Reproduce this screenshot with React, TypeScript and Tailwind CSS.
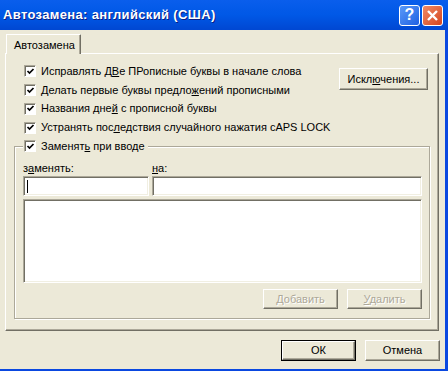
import React from "react";

function U({ children }: { children: React.ReactNode }) {
  return <span className="underline decoration-1 underline-offset-[1px]">{children}</span>;
}

function Check() {
  return (
    <div className="w-[12px] h-[12px] shrink-0 bg-white border-t border-l border-t-[#ACA899] border-l-[#ACA899] border-b border-r border-b-white border-r-white shadow-[inset_1px_1px_0_#716F64] flex items-center justify-center">
      <svg width="9" height="9" viewBox="0 0 9 9">
        <polyline points="1.5,4 3.5,6 7.5,2" fill="none" stroke="#000" strokeWidth="1.7" />
      </svg>
    </div>
  );
}

function CheckRow({ children }: { children: React.ReactNode }) {
  return (
    <div className="h-[18.75px] flex items-center gap-[5px]">
      <Check />
      <span>{children}</span>
    </div>
  );
}

function Btn({
  children,
  w,
  h,
  disabled,
  def,
}: {
  children: React.ReactNode;
  w: string;
  h: string;
  disabled?: boolean;
  def?: boolean;
}) {
  return (
    <div className={`${w} ${h} ${def ? "border border-black" : ""} shrink-0`}>
      <div className="w-full h-full border-t border-l border-t-white border-l-white border-b border-r border-b-[#716F64] border-r-[#716F64] shadow-[inset_-1px_-1px_0_#ACA899] flex items-center justify-center">
        <span className={disabled ? "text-[#ACA899] [text-shadow:1px_1px_0_#fff]" : ""}>{children}</span>
      </div>
    </div>
  );
}

export default function App() {
  return (
    <div className="w-[448px] h-[371px] flex flex-col bg-[#0A48E0] font-['Liberation_Sans',sans-serif] text-[11px] text-black leading-[13px] overflow-hidden">
      {/* title bar */}
      <div className="h-[30px] shrink-0 flex items-center pl-[3px] pr-[5px] bg-gradient-to-b from-[#0A5EEC] via-[#0058E6] to-[#0047D2]">
        <span className="text-white font-bold text-[13px] leading-[16px] [text-shadow:1px_1px_0_#0A1E84] tracking-[0.35px]">
          Автозамена: английский (США)
        </span>
        <div className="ml-auto flex gap-[2px]">
          <div className="w-[21px] h-[21px] rounded-[3px] border border-white bg-gradient-to-br from-[#5A9AF8] to-[#1F5FE2] flex items-center justify-center text-white font-bold text-[16px] leading-none">
            ?
          </div>
          <div className="w-[21px] h-[21px] rounded-[3px] border border-white bg-gradient-to-br from-[#F08A64] to-[#D4431B] flex items-center justify-center">
            <svg width="13" height="13" viewBox="0 0 13 13">
              <path d="M2 2 L11 11 M11 2 L2 11" stroke="#fff" strokeWidth="2.4" />
            </svg>
          </div>
        </div>
      </div>

      {/* body */}
      <div className="flex-1 flex flex-col bg-[#ECE9D8] mr-[3px] mb-[2px] pl-[5px] pr-[5px] pt-[4px]">
        {/* tab */}
        <div className="flex">
          <div className="ml-[1px] w-[75px] h-[20px] -mb-[1px] relative z-10 bg-[#ECE9D8] border-t border-l border-t-white border-l-white border-r border-r-[#716F64] shadow-[inset_-1px_0_0_#ACA899] rounded-tr-[1px] pl-[7px] pt-[4px]">
            Автозамена
          </div>
        </div>

        {/* panel */}
        <div className="w-[434px] h-[278px] border-t border-l border-t-white border-l-white border-b border-r border-b-[#716F64] border-r-[#716F64] shadow-[inset_-1px_-1px_0_#ACA899] px-[8px] flex flex-col">
          <div className="h-[92px] flex">
            <div className="pt-[8px] pl-[10px] flex flex-col">
              <CheckRow>
                Исправлять Д<U>В</U>е ПРописные буквы в начале слова
              </CheckRow>
              <CheckRow>
                Делать первые буквы предло<U>ж</U>ений прописными
              </CheckRow>
              <CheckRow>
                Названия дне<U>й</U> с прописной буквы
              </CheckRow>
              <CheckRow>
                Устранять пос<U>л</U>едствия случайного нажатия cAPS LOCK
              </CheckRow>
            </div>
            <div className="ml-auto mr-[2px] mt-[14px]">
              <Btn w="w-[89px]" h="h-[22px]">
                Искл<U>ю</U>чения...
              </Btn>
            </div>
          </div>

          {/* group box */}
          <div className="relative h-[173px] border border-[#ACA899] shadow-[inset_1px_1px_0_#fff,1px_1px_0_#fff] pl-[8px] pr-[7px] pt-[15px]">
            <div className="absolute left-[8px] -top-[10px] bg-[#ECE9D8] px-[1px] pr-[3px]">
              <CheckRow>
                Заменят<U>ь</U> при вводе
              </CheckRow>
            </div>
            <div className="flex gap-[3px]">
              <div className="w-[126px]">
                з<U>а</U>менять:
              </div>
              <div>
                <U>н</U>а:
              </div>
            </div>
            <div className="flex gap-[3px] mt-[1px]">
              <div className="w-[126px] h-[20px] bg-white border-t border-l border-t-[#ACA899] border-l-[#ACA899] border-b border-r border-b-white border-r-white shadow-[inset_1px_1px_0_#716F64,inset_-1px_-1px_0_#F1EFE2] pl-[3px] pt-[3px]">
                <div className="w-[1px] h-[13px] bg-black" />
              </div>
              <div className="w-[270px] h-[20px] bg-white border-t border-l border-t-[#ACA899] border-l-[#ACA899] border-b border-r border-b-white border-r-white shadow-[inset_1px_1px_0_#716F64,inset_-1px_-1px_0_#F1EFE2]" />
            </div>
            <div className="mt-[3px] w-[399px] h-[84px] bg-white border-t border-l border-t-[#ACA899] border-l-[#ACA899] border-b border-r border-b-white border-r-white shadow-[inset_1px_1px_0_#716F64,inset_-1px_-1px_0_#F1EFE2]" />
            <div className="mt-[6px] w-[399px] flex justify-end gap-[9px]">
              <Btn w="w-[75px]" h="h-[20px]" disabled>
                <U>Д</U>обавить
              </Btn>
              <Btn w="w-[75px]" h="h-[20px]" disabled>
                <U>У</U>далить
              </Btn>
            </div>
          </div>
        </div>

        {/* dialog buttons */}
        <div className="mt-[9px] flex justify-end gap-[9px]">
          <Btn w="w-[75px]" h="h-[21px]" def>
            ОК
          </Btn>
          <Btn w="w-[75px]" h="h-[21px]">
            Отмена
          </Btn>
        </div>
      </div>
    </div>
  );
}
